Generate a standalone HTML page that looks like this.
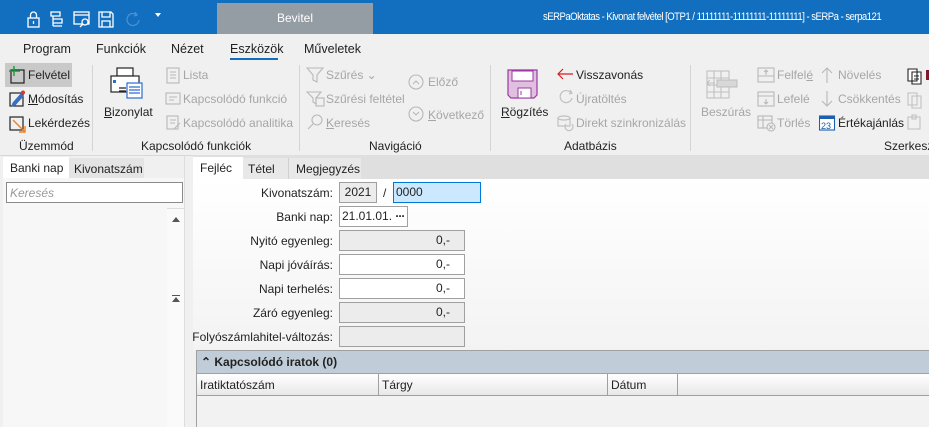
<!DOCTYPE html>
<html><head><meta charset="utf-8"><style>
*{margin:0;padding:0;box-sizing:border-box}
body{width:929px;height:427px;overflow:hidden;background:#f0f0f0;font-family:"Liberation Sans",sans-serif;font-size:12px;color:#222;position:relative}
.a{position:absolute;white-space:nowrap}
.g{color:#a6a6a6}
.lbl{position:absolute;right:596px;text-align:right;white-space:nowrap}
.box{position:absolute;border:1px solid #a0a0a0;height:21px;line-height:19px}
svg{position:absolute}
</style></head><body>
<!-- title bar -->
<div class="a" style="left:0;top:0;width:929px;height:34px;background:#126fbf"></div>
<div class="a" style="left:217px;top:3px;width:156px;height:31px;background:#949ca4;color:#fff;text-align:center;line-height:31px">Bevitel</div>
<div class="a" style="left:543px;top:11px;color:#fff;font-size:11px;letter-spacing:-0.6px;transform:scaleX(0.87);transform-origin:0 0">sERPaOktatas - Kivonat felvétel [OTP1 / 11111111-11111111-11111111] - sERPa - serpa121</div>
<svg style="left:26px;top:10px" width="140" height="18" fill="none" stroke="#fff" stroke-width="1.3">
<rect x="2" y="8" width="11" height="9"/><path d="M4.5 8V5a3 3 0 0 1 6 0v3M7.5 11v3"/>
<path d="M25 2h9v4h-9zM27 6v10M27 9h9v4h-9zM27 16h9"/>
<rect x="48" y="2" width="15" height="12"/><path d="M48 5h15"/><circle cx="59" cy="12" r="3" fill="#126fbf"/><path d="M57 14l-3 3"/>
<path d="M73 2h12l2 2v13H73zM76 2v5h8V2M76 17v-6h8v6"/>
<path d="M111 5a6 6 0 1 0 2 5M109 2l2 3-3 1" stroke="#4a8fd0"/>
</svg>
<div class="a" style="left:155px;top:13px;width:0;height:0;border-left:3.5px solid transparent;border-right:3.5px solid transparent;border-top:4px solid #fff"></div>
<!-- menu -->
<div class="a" style="left:0;top:34px;width:929px;height:28px;background:#f0f0f0"></div>
<div class="a" style="left:23px;top:42px;font-size:12.5px">Program</div>
<div class="a" style="left:96px;top:42px;font-size:12.5px">Funkciók</div>
<div class="a" style="left:171px;top:42px;font-size:12.5px">Nézet</div>
<div class="a" style="left:230px;top:42px;font-size:12.5px">Eszközök</div>
<div class="a" style="left:230px;top:58px;width:48px;height:2px;background:#126fbf"></div>
<div class="a" style="left:304px;top:42px;font-size:12.5px">Műveletek</div>
<!-- ribbon separators -->
<div class="a" style="left:92px;top:65px;width:1px;height:86px;background:#d4d4d4"></div>
<div class="a" style="left:299px;top:65px;width:1px;height:86px;background:#d4d4d4"></div>
<div class="a" style="left:490px;top:65px;width:1px;height:86px;background:#d4d4d4"></div>
<div class="a" style="left:690px;top:65px;width:1px;height:86px;background:#d4d4d4"></div>
<div class="a" style="left:0;top:155px;width:929px;height:1px;background:#d8d8d8"></div>
<!-- Üzemmód -->
<div class="a" style="left:5px;top:63px;width:67px;height:24px;background:#c9c9c9"></div>
<svg style="left:8px;top:65px" width="20" height="70" fill="none" stroke-width="1.2">
<rect x="3" y="5" width="13" height="13" stroke="#222"/><path d="M6 1v10M1 6h11" stroke="#1a9a3a" stroke-width="1.4"/>
<rect x="2" y="28" width="13" height="13" stroke="#222"/><path d="M5 38l8-9 2 2-8 9-3 1z" fill="#3a6fc0" stroke="#3a6fc0"/><circle cx="15" cy="27.5" r="2" fill="#e03030" stroke="none"/>
<rect x="2" y="52" width="13" height="13" stroke="#222"/><path d="M5 55l12 12M17 61v6h-6" stroke="#f08020" stroke-width="1.4"/>
</svg>
<div class="a" style="left:28px;top:68px">Felvétel</div>
<div class="a" style="left:28px;top:92px"><u>M</u>ódosítás</div>
<div class="a" style="left:28px;top:116px">Lekérdezés</div>
<div class="a" style="left:19px;top:139px">Üzemmód</div>
<!-- Bizonylat -->
<svg style="left:109px;top:66px" width="36" height="34" fill="none" stroke="#222" stroke-width="1.2">
<rect x="8" y="2" width="16" height="8" fill="#fff"/><rect x="2" y="10" width="28" height="16" fill="#fff"/><rect x="4" y="14" width="3" height="3" fill="#2a6fd0" stroke="none"/>
<rect x="18" y="17" width="15" height="15" fill="#fff" stroke="#2a6fd0"/><path d="M20 21h11M20 24h11M20 27h11" stroke="#2a6fd0"/><path d="M10 22h7M10 25h7"/>
</svg>
<div class="a" style="left:104px;top:105px"><u>B</u>izonylat</div>
<svg style="left:165px;top:67px" width="18" height="64" fill="none" stroke="#b8b8b8" stroke-width="1.1">
<rect x="2" y="1" width="12" height="15"/><path d="M5 5h6M5 8h6M5 11h6"/>
<rect x="1" y="26" width="14" height="11"/><path d="M4 30h8M4 33h5"/>
<rect x="2" y="49" width="11" height="13"/><path d="M5 53h6M5 56h5M9 62l6-6"/>
</svg>
<div class="a g" style="left:183px;top:68px">Lista</div>
<div class="a g" style="left:183px;top:92px">Kapcsolódó funkció</div>
<div class="a g" style="left:183px;top:116px">Kapcsolódó analitika</div>
<div class="a" style="left:141px;top:139px">Kapcsolódó funkciók</div>
<!-- Navigáció -->
<svg style="left:306px;top:66px" width="20" height="66" fill="none" stroke="#b8b8b8" stroke-width="1.1">
<path d="M1 2h16l-6 7v7l-4-2V9z"/>
<path d="M1 26h14l-5 6v6l-3-2v-4z"/><rect x="10" y="32" width="8" height="8"/>
<circle cx="11" cy="54" r="5"/><path d="M7 58l-5 5"/>
</svg>
<div class="a g" style="left:326px;top:68px">Szűrés &#8964;</div>
<div class="a g" style="left:326px;top:92px">Szűrési feltétel</div>
<div class="a g" style="left:326px;top:116px"><u>K</u>eresés</div>
<svg style="left:408px;top:73px" width="18" height="50" fill="none" stroke="#b8b8b8" stroke-width="1.1">
<circle cx="8" cy="9" r="7"/><path d="M5 11l3-3 3 3"/>
<circle cx="8" cy="41" r="7"/><path d="M5 39l3 3 3-3"/>
</svg>
<div class="a g" style="left:428px;top:75px">Előző</div>
<div class="a g" style="left:428px;top:108px"><u>K</u>övetkező</div>
<div class="a" style="left:369px;top:139px">Navigáció</div>
<!-- Adatbázis -->
<svg style="left:507px;top:69px" width="32" height="30">
<path d="M1 1h29v25l-3 3H4l-3-3z" fill="#e0bfe0" stroke="#9a3aa0" stroke-width="1.2"/>
<rect x="5" y="2" width="21" height="10" fill="#fff" stroke="#9a3aa0"/><rect x="11" y="19" width="13" height="10" fill="#fff" stroke="#9a3aa0"/><path d="M14 22v4" stroke="#9a3aa0"/>
</svg>
<div class="a" style="left:501px;top:105px"><u>R</u>ögzítés</div>
<svg style="left:556px;top:66px" width="20" height="66" fill="none" stroke-width="1.2">
<path d="M2 8h15M7 3L2 8l5 5" stroke="#d42020"/>
<path d="M15 27a6 6 0 1 0 1 5M14 24l2 3-3 1" stroke="#c0c0c0"/>
<ellipse cx="8" cy="52" rx="6" ry="2" stroke="#c0c0c0"/><path d="M2 52v8h12v-8M10 58a4 4 0 1 0 6 0" stroke="#c0c0c0"/>
</svg>
<div class="a" style="left:576px;top:68px">Visszavonás</div>
<div class="a g" style="left:576px;top:92px">Újratöltés</div>
<div class="a g" style="left:576px;top:116px">Direkt szinkronizálás</div>
<div class="a" style="left:564px;top:139px">Adatbázis</div>
<!-- Szerkesztés -->
<svg style="left:705px;top:70px" width="36" height="30" fill="none" stroke="#c0c0c0" stroke-width="1.1">
<rect x="2" y="1" width="22" height="27"/><path d="M2 8h22M2 15h22M2 22h22M9 1v27M16 1v27"/>
<rect x="12" y="10" width="20" height="7" fill="#d8d8d8"/><path d="M2 13h8M5 10l-3 3 3 3"/>
</svg>
<div class="a g" style="left:701px;top:105px">Beszúrás</div>
<svg style="left:757px;top:66px" width="20" height="66" fill="none" stroke="#b8b8b8" stroke-width="1.1">
<rect x="1" y="2" width="16" height="14"/><path d="M1 10h16M9 4v5M7 6l2-2 2 2"/>
<rect x="1" y="26" width="16" height="14"/><path d="M1 30h16M9 33v5M7 36l2 2 2-2"/>
<rect x="1" y="50" width="14" height="12"/><path d="M1 54h14M6 50v12"/><circle cx="14" cy="61" r="4" fill="#f0f0f0"/><path d="M12 59l4 4M16 59l-4 4"/>
</svg>
<div class="a g" style="left:777px;top:68px">Felfel<u>é</u></div>
<div class="a g" style="left:777px;top:92px">Lefelé</div>
<div class="a g" style="left:777px;top:116px">Törlés</div>
<svg style="left:819px;top:66px" width="20" height="66" fill="none" stroke-width="1.1">
<path d="M8 2v15M3 7l5-5 5 5" stroke="#b8b8b8"/>
<path d="M8 25v15M3 35l5 5 5-5" stroke="#b8b8b8"/>
<rect x="0.5" y="50" width="15" height="14" fill="#fff" stroke="#1a5fb0"/><rect x="0.5" y="50" width="15" height="3" fill="#1a5fb0"/>
<text x="2" y="63" font-size="9" fill="#1a5fb0" stroke="none" font-family="Liberation Sans">23</text>
</svg>
<div class="a g" style="left:838px;top:68px">Növelés</div>
<div class="a g" style="left:838px;top:92px">Csökkentés</div>
<div class="a" style="left:838px;top:116px">Értékajánlás</div>
<svg style="left:906px;top:66px" width="23" height="66" fill="none" stroke-width="1.1">
<path d="M2 3h9v12H2zM6 6h9v12H6z" stroke="#222" fill="#fff"/><path d="M8 10h5M8 13h5" stroke="#222"/>
<path d="M2 27h9v12H2zM6 30h9v12H6z" stroke="#c0c0c0" fill="#f0f0f0"/>
<path d="M2 51h12v12H2zM6 49h4v4H6z" stroke="#c0c0c0"/>
<rect x="20" y="4" width="3" height="10" fill="#7a1a2a" stroke="none"/>
</svg>
<div class="a" style="left:884px;top:139px;width:45px;overflow:hidden">Szerkesztés</div>
<!-- left panel -->
<div class="a" style="left:3px;top:157px;width:66px;height:22px;background:#fff"></div>
<div class="a" style="left:10px;top:161px">Banki nap</div>
<div class="a" style="left:69px;top:158px;width:75px;height:20px;background:#e4e4e4"></div>
<div class="a" style="left:74px;top:162px">Kivonatszám</div>
<div class="a" style="left:3px;top:178px;width:181px;height:249px;background:#f7f7f7"></div>
<div class="a" style="left:6px;top:182px;width:177px;height:21px;background:#fff;border:1px solid #8a8a8a"></div>
<div class="a" style="left:10px;top:186px;color:#999;font-style:italic">Keresés</div>
<div class="a" style="left:167px;top:208px;width:17px;height:219px;background:#fafafa;border-top:1px solid #ddd"></div>
<div class="a" style="left:172px;top:217px;width:0;height:0;border-left:4px solid transparent;border-right:4px solid transparent;border-bottom:5px solid #555"></div>
<div class="a" style="left:172px;top:295px;width:8px;height:1px;background:#555"></div>
<div class="a" style="left:172px;top:297px;width:0;height:0;border-left:4px solid transparent;border-right:4px solid transparent;border-bottom:5px solid #555"></div>
<div class="a" style="left:184px;top:156px;width:9px;height:271px;background:#f0f0f0;border-left:1px solid #ddd"></div>
<!-- right panel -->
<div class="a" style="left:193px;top:155px;width:736px;height:24px;background:#dfdfdf"></div>
<div class="a" style="left:193px;top:157px;width:50px;height:22px;background:#fff"></div>
<div class="a" style="left:200px;top:161px">Fejléc</div>
<div class="a" style="left:243px;top:158px;width:46px;height:21px;background:#e8e8e8;border-right:1px solid #d0d0d0"></div>
<div class="a" style="left:248px;top:162px">Tétel</div>
<div class="a" style="left:289px;top:158px;width:72px;height:21px;background:#e8e8e8"></div>
<div class="a" style="left:296px;top:162px">Megjegyzés</div>
<div class="a" style="left:193px;top:179px;width:736px;height:171px;background:linear-gradient(#fff,#f3f3f3)"></div>
<div class="lbl" style="top:186px">Kivonatszám:</div>
<div class="box" style="left:339px;top:182px;width:38px;background:#ececec;text-align:center">2021</div>
<div class="a" style="left:383px;top:186px">/</div>
<div class="box" style="left:393px;top:182px;width:88px;background:#cce8ff;border-color:#0078d7;padding-left:2px">0000</div>
<div class="lbl" style="top:210px">Banki nap:</div>
<div class="box" style="left:339px;top:206px;width:69px;background:#fff;padding-left:2px">21.01.01. <b style="letter-spacing:-1px">···</b></div>
<div class="lbl" style="top:234px">Nyitó egyenleg:</div>
<div class="box" style="left:339px;top:230px;width:126px;background:#ececec;text-align:right;padding-right:14px">0,-</div>
<div class="lbl" style="top:258px">Napi jóváírás:</div>
<div class="box" style="left:339px;top:254px;width:126px;background:#fff;text-align:right;padding-right:14px">0,-</div>
<div class="lbl" style="top:282px">Napi terhelés:</div>
<div class="box" style="left:339px;top:278px;width:126px;background:#fff;text-align:right;padding-right:14px">0,-</div>
<div class="lbl" style="top:306px">Záró egyenleg:</div>
<div class="box" style="left:339px;top:302px;width:126px;background:#ececec;text-align:right;padding-right:14px">0,-</div>
<div class="lbl" style="top:330px">Folyószámlahitel-változás:</div>
<div class="box" style="left:339px;top:326px;width:126px;background:#ececec"></div>
<!-- Kapcsolódó iratok -->
<div class="a" style="left:196px;top:350px;width:733px;height:24px;background:#c0cdd9;border-top:1px solid #a0a0a0;border-bottom:1px solid #a0a0a0;border-left:1px solid #a0a0a0"></div>
<div class="a" style="left:201px;top:355px;font-weight:bold">&#8963; Kapcsolódó iratok (0)</div>
<div class="a" style="left:196px;top:374px;width:733px;height:22px;background:linear-gradient(#fff,#e8e8e8);border-bottom:1px solid #a0a0a0;border-left:1px solid #a0a0a0"></div>
<div class="a" style="left:378px;top:374px;width:1px;height:21px;background:#a0a0a0"></div>
<div class="a" style="left:607px;top:374px;width:1px;height:21px;background:#a0a0a0"></div>
<div class="a" style="left:677px;top:374px;width:1px;height:21px;background:#a0a0a0"></div>
<div class="a" style="left:200px;top:378px">Iratiktatószám</div>
<div class="a" style="left:382px;top:378px">Tárgy</div>
<div class="a" style="left:611px;top:378px">Dátum</div>
<div class="a" style="left:196px;top:396px;width:733px;height:31px;background:#f2f2f2;border-left:1px solid #a0a0a0"></div>
</body></html>
